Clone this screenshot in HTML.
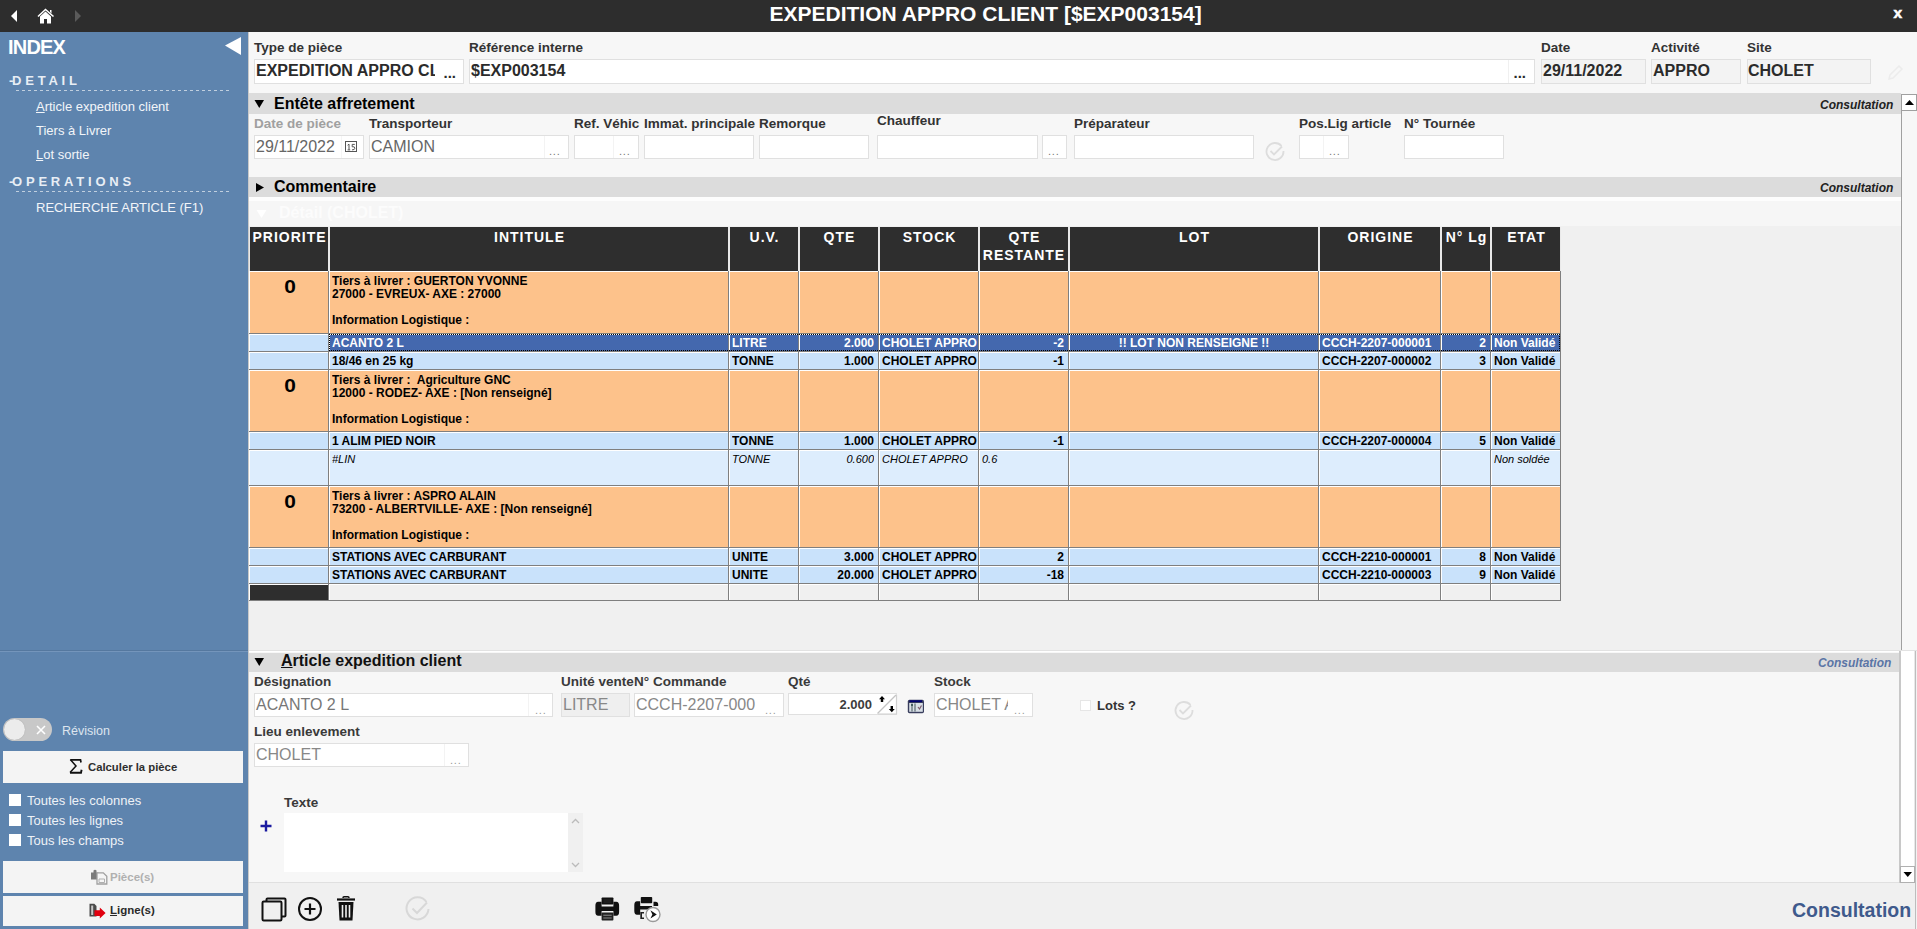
<!DOCTYPE html><html><head><meta charset="utf-8"><style>
*{box-sizing:border-box;margin:0;padding:0}
html,body{width:1917px;height:929px;overflow:hidden;background:#f7f7f7;font-family:"Liberation Sans",sans-serif;position:relative}
.abs{position:absolute}
.t{position:absolute;white-space:pre;line-height:1}
.lbl{position:absolute;white-space:pre;font-weight:bold;font-size:13.5px;color:#333;line-height:1}
.inp{position:absolute;background:#fff;border:1px solid #e0e0e0}
.band{position:absolute;background:#dcdcdc}
.dots{position:absolute;white-space:pre;font-size:11px;color:#777;line-height:1;letter-spacing:0px}
.cell{position:absolute;overflow:hidden;white-space:pre;font-weight:bold;font-size:12px;line-height:13px;color:#000}
</style></head><body>
<div class="abs" style="left:0;top:0;width:1917px;height:32px;background:#2d2d2d"></div>
<svg class="abs" style="left:0;top:0" width="100" height="31"><path d="M11 16 L17 10 L17 22 Z" fill="#fff"/><path d="M38 16.5 L45.5 9.5 L53.5 16.5" fill="none" stroke="#fff" stroke-width="1.6"/><path d="M40 16.5 L45.5 11.5 L51 16.5 L51 23.5 L47 23.5 L47 19 L44 19 L44 23.5 L40 23.5 Z" fill="#fff"/><path d="M50 10 L51.5 10 L51.5 13.5 L50 12 Z" fill="#fff"/><path d="M75 10 L81 16 L75 22 Z" fill="#5a5a5a"/></svg>
<div class="t" style="left:769.5px;top:2.5px;font-size:21px;font-weight:bold;color:#fff">EXPEDITION APPRO CLIENT [$EXP003154]</div>
<div class="t" style="left:1893.5px;top:5px;font-size:15.5px;font-weight:bold;color:#fff;-webkit-text-stroke:0.6px #fff">x</div>
<div class="abs" style="left:0;top:32px;width:249px;height:897px;background:#5e84ae"></div>
<div class="abs" style="left:0;top:650px;width:248px;height:1px;background:#55789f"></div><div class="abs" style="left:0;top:651px;width:248px;height:1px;background:#7495bb"></div>
<div class="t" style="left:8px;top:37px;font-size:20px;font-weight:bold;letter-spacing:-0.8px;color:#fff">INDEX</div>
<svg class="abs" style="left:222px;top:34px" width="24" height="24"><path d="M3 11.5 L19 3 L19 21 Z" fill="#fff"/></svg>
<div class="t" style="left:9px;top:74px;font-size:13px;font-weight:bold;color:#e8eef5">-</div>
<div class="t" style="left:12px;top:74px;font-size:13px;font-weight:bold;color:#e8eef5;letter-spacing:3.8px">DETAIL</div>
<div class="abs" style="left:16px;top:90px;width:213px;height:1px;background:repeating-linear-gradient(90deg,#c0cfdf 0 3px,transparent 3px 6px)"></div>
<div class="t" style="left:36px;top:100px;font-size:13px;color:#f2f5f9"><u>A</u>rticle expedition client</div>
<div class="t" style="left:36px;top:124px;font-size:13px;color:#f2f5f9">Tiers à Livrer</div>
<div class="t" style="left:36px;top:148px;font-size:13px;color:#f2f5f9"><u>L</u>ot sortie</div>
<div class="t" style="left:9px;top:175px;font-size:13px;font-weight:bold;color:#e8eef5">-</div>
<div class="t" style="left:12px;top:175px;font-size:13px;font-weight:bold;color:#e8eef5;letter-spacing:3.8px">OPERATIONS</div>
<div class="abs" style="left:16px;top:191px;width:213px;height:1px;background:repeating-linear-gradient(90deg,#c0cfdf 0 3px,transparent 3px 6px)"></div>
<div class="t" style="left:36px;top:201px;font-size:13px;color:#f2f5f9">RECHERCHE ARTICLE (F1)</div>
<div class="abs" style="left:3px;top:718px;width:49px;height:23px;border-radius:12px;background:#c8c8c8"></div>
<div class="abs" style="left:4px;top:719px;width:21px;height:21px;border-radius:50%;background:#ececec;box-shadow:0 0 1px #999"></div>
<svg class="abs" style="left:34px;top:723px" width="14" height="14"><path d="M3 3 L11 11 M11 3 L3 11" stroke="#fff" stroke-width="1.6"/></svg>
<div class="t" style="left:62px;top:725px;font-size:12.5px;color:#dde5ee">Révision</div>
<div class="abs" style="left:3px;top:751px;width:240px;height:32px;background:#f4f4f4"></div>
<svg class="abs" style="left:68px;top:758px" width="16" height="17"><path d="M2.5 1.8 H12.5 L13 4.5" fill="none" stroke="#111" stroke-width="1.7"/><path d="M2.3 1.5 L8 8 L2 14.5" fill="none" stroke="#111" stroke-width="1.5"/><path d="M2 14.8 H13 L13.6 11.8" fill="none" stroke="#111" stroke-width="1.9"/></svg>
<div class="t" style="left:88px;top:761.5px;font-size:11.3px;font-weight:bold;color:#2e2e2e">Calculer la pièce</div>
<div class="abs" style="left:9px;top:794px;width:12px;height:12px;background:#fff"></div>
<div class="t" style="left:27px;top:794px;font-size:13px;color:#eef2f7">Toutes les colonnes</div>
<div class="abs" style="left:9px;top:814px;width:12px;height:12px;background:#fff"></div>
<div class="t" style="left:27px;top:814px;font-size:13px;color:#eef2f7">Toutes les lignes</div>
<div class="abs" style="left:9px;top:834px;width:12px;height:12px;background:#fff"></div>
<div class="t" style="left:27px;top:834px;font-size:13px;color:#eef2f7">Tous les champs</div>
<div class="abs" style="left:3px;top:861px;width:240px;height:32px;background:#f4f4f4"></div>
<svg class="abs" style="left:86px;top:866px" width="24" height="22"><path d="M5 6.5 H7.5 V4.5 Q9 2.8 10.5 4.5 V6.5 H12.5 V9 Q10.8 9.8 12.5 11.2 V13.5 H5 Z" fill="#7a7a7a"/><path d="M11 6.8 H17.3 L20.8 10.3 V18 H11 Z" fill="#f5f5f5" stroke="#a0a0a0" stroke-width="1.3"/><path d="M13 13 H18.5 V16.5 H13 Z" fill="none" stroke="#b0b0b0" stroke-width="1"/></svg>
<div class="t" style="left:110px;top:872px;font-size:11.5px;font-weight:bold;color:#b0b0b0">Pièce(s)</div>
<div class="abs" style="left:3px;top:896px;width:240px;height:30px;background:#f4f4f4"></div>
<svg class="abs" style="left:86px;top:900px" width="24" height="22"><path d="M3.5 3.8 H8.3 L10.5 6 V16.5 H3.5 Z" fill="#4a4a4a"/><path d="M5.2 5.5 H7.2 V15 H5.2 Z" fill="#c8c8c8"/><path d="M8.5 10.2 H13.8 V7.6 L19.6 13.1 L13.8 18.6 V16 H8.5 Z" fill="#e0000f"/></svg>
<div class="t" style="left:110px;top:905px;font-size:11.5px;font-weight:bold;color:#2a2a2a"><u>L</u>igne(s)</div>
<div class="abs" style="left:249px;top:32px;width:1668px;height:619px;background:#f7f7f7"></div>
<div class="abs" style="left:248px;top:32px;width:1px;height:897px;background:#c9c9c9"></div>
<div class="lbl" style="left:254px;top:41px;color:#333">Type de pièce</div>
<div class="inp" style="left:254px;top:59px;width:210px;height:25px;background:#fff;border-color:#e0e0e0"></div>
<div class="t" style="left:256px;top:63px;width:179px;overflow:hidden;font-size:16px;font-weight:bold;color:#2b2b2b">EXPEDITION APPRO CL</div>
<div class="t" style="left:443.5px;top:65px;font-size:15px;font-weight:bold;color:#2b2b2b">...</div>
<div class="lbl" style="left:469px;top:41px;color:#333">Référence interne</div>
<div class="inp" style="left:469px;top:59px;width:1066px;height:25px;background:#fff;border-color:#e0e0e0"></div>
<div class="abs" style="left:1508px;top:60px;width:1px;height:23px;background:#f0f0f0"></div>
<div class="t" style="left:471px;top:63px;font-size:16px;font-weight:bold;color:#2b2b2b">$EXP003154</div>
<div class="t" style="left:1513.5px;top:65px;font-size:15px;font-weight:bold;color:#2b2b2b">...</div>
<div class="lbl" style="left:1541px;top:41px;color:#333">Date</div>
<div class="inp" style="left:1541px;top:59px;width:105px;height:25px;background:#f3f3f3;border-color:#e0e0e0"></div>
<div class="t" style="left:1543px;top:63px;font-size:16px;font-weight:bold;color:#2b2b2b">29/11/2022</div>
<div class="lbl" style="left:1651px;top:41px;color:#333">Activité</div>
<div class="inp" style="left:1651px;top:59px;width:90px;height:25px;background:#f3f3f3;border-color:#e0e0e0"></div>
<div class="t" style="left:1653px;top:63px;font-size:16px;font-weight:bold;color:#2b2b2b">APPRO</div>
<div class="lbl" style="left:1747px;top:41px;color:#333">Site</div>
<div class="inp" style="left:1747px;top:59px;width:124px;height:25px;background:#f3f3f3;border-color:#e0e0e0"></div>
<div class="t" style="left:1748px;top:63px;font-size:16px;font-weight:bold;color:#2b2b2b">CHOLET</div>
<svg class="abs" style="left:1886px;top:64px" width="18" height="18"><path d="M3 15 L4 11 L13 2 L16 5 L7 14 Z" fill="none" stroke="#ececec" stroke-width="1.5"/></svg>
<div class="band" style="left:249px;top:93px;width:1652px;height:21px"></div>
<svg class="abs" style="left:254px;top:99px" width="12" height="10"><path d="M0.5 1 L10 1 L5.25 9 Z" fill="#000"/></svg>
<div class="t" style="left:274px;top:96px;font-size:16px;font-weight:bold;color:#000">Entête affretement</div>
<div class="t" style="left:1820px;top:98.5px;font-size:12px;font-style:italic;font-weight:bold;color:#222">Consultation</div>
<div class="abs" style="left:1901px;top:94px;width:1px;height:557px;background:#a0a0a0"></div>
<div class="abs" style="left:1901px;top:94px;width:16px;height:17px;background:#fff;border:1px solid #a0a0a0"></div>
<svg class="abs" style="left:1904px;top:99px" width="12" height="8"><path d="M1 6 L5.5 1 L10 6 Z" fill="#000"/></svg>
<div class="lbl" style="left:254px;top:117px;color:#a0a0a0">Date de pièce</div>
<div class="inp" style="left:254px;top:135px;width:110px;height:24px;background:#fff;border-color:#e0e0e0"></div>
<div class="abs" style="left:341px;top:136px;width:1px;height:22px;background:#f5f5f5"></div>
<div class="t" style="left:256px;top:139px;font-size:16px;color:#666">29/11/2022</div>
<svg class="abs" style="left:344px;top:140px" width="14" height="14"><rect x="1.5" y="1.5" width="11" height="10" fill="none" stroke="#555" stroke-width="1"/><path d="M3.6 5.2 L5 4.2 V9.8 M3.6 9.9 H6.2" fill="none" stroke="#555" stroke-width="1"/><path d="M10.8 4.4 H8.2 V6.8 Q10.9 6.2 10.9 8.2 Q10.9 9.9 8 9.9" fill="none" stroke="#555" stroke-width="1"/></svg>
<div class="lbl" style="left:369px;top:117px;color:#333">Transporteur</div>
<div class="inp" style="left:369px;top:135px;width:200px;height:24px;background:#fff;border-color:#e0e0e0"></div>
<div class="abs" style="left:544px;top:136px;width:1px;height:22px;background:#f3f3f3"></div>
<div class="t" style="left:371px;top:139px;font-size:16px;color:#666">CAMION</div>
<div class="dots" style="left:549px;top:146px;color:#777;font-size:11px;letter-spacing:0.8px">...</div>
<div class="lbl" style="left:574px;top:117px;color:#333">Ref. Véhic</div>
<div class="inp" style="left:574px;top:135px;width:65px;height:24px;background:#fff;border-color:#e0e0e0"></div>
<div class="abs" style="left:613px;top:136px;width:1px;height:22px;background:#f3f3f3"></div>
<div class="dots" style="left:619px;top:146px;color:#777;font-size:11px;letter-spacing:0.8px">...</div>
<div class="lbl" style="left:644px;top:117px;color:#333">Immat. principale</div>
<div class="inp" style="left:644px;top:135px;width:110px;height:24px;background:#fff;border-color:#e0e0e0"></div>
<div class="lbl" style="left:759px;top:117px;color:#333">Remorque</div>
<div class="inp" style="left:759px;top:135px;width:110px;height:24px;background:#fff;border-color:#e0e0e0"></div>
<div class="lbl" style="left:877px;top:114px;color:#333">Chauffeur</div>
<div class="inp" style="left:877px;top:135px;width:161px;height:24px;background:#fff;border-color:#e0e0e0"></div>
<div class="inp" style="left:1042px;top:135px;width:25px;height:24px;background:#fff;border-color:#e0e0e0"></div>
<div class="dots" style="left:1048px;top:146px;color:#777;font-size:11px;letter-spacing:0.8px">...</div>
<div class="lbl" style="left:1074px;top:117px;color:#333">Préparateur</div>
<div class="inp" style="left:1074px;top:135px;width:180px;height:24px;background:#fff;border-color:#e0e0e0"></div>
<svg class="abs" style="left:1264px;top:140px" width="22" height="22"><path d="M17.5 6 A8.5 8.5 0 1 0 19.5 11" fill="none" stroke="#ddd" stroke-width="1.8"/><path d="M6.5 11 L10 14.5 L18 6.5" fill="none" stroke="#ddd" stroke-width="1.8"/></svg>
<div class="lbl" style="left:1299px;top:117px;color:#333">Pos.Lig article</div>
<div class="inp" style="left:1299px;top:135px;width:50px;height:24px;background:#fff;border-color:#e0e0e0"></div>
<div class="abs" style="left:1323px;top:136px;width:1px;height:22px;background:#f3f3f3"></div>
<div class="dots" style="left:1329px;top:146px;color:#777;font-size:11px;letter-spacing:0.8px">...</div>
<div class="lbl" style="left:1404px;top:117px;color:#333">N° Tournée</div>
<div class="inp" style="left:1404px;top:135px;width:100px;height:24px;background:#fff;border-color:#e0e0e0"></div>
<div class="band" style="left:249px;top:177px;width:1652px;height:20px"></div>
<svg class="abs" style="left:255px;top:182px" width="10" height="12"><path d="M1 1 L9 5.5 L1 10 Z" fill="#000"/></svg>
<div class="t" style="left:274px;top:179px;font-size:16px;font-weight:bold;color:#000">Commentaire</div>
<div class="t" style="left:1820px;top:181.5px;font-size:12px;font-style:italic;font-weight:bold;color:#222">Consultation</div>
<div class="abs" style="left:249px;top:197px;width:1652px;height:4px;background:#fdfdfd"></div>
<div class="abs" style="left:249px;top:201px;width:1652px;height:25px;background:#f6f6f6"></div>
<svg class="abs" style="left:256px;top:209px" width="12" height="10"><path d="M0.5 1 L10.5 1 L5.5 9 Z" fill="#fff"/></svg>
<div class="t" style="left:279px;top:205px;font-size:16px;font-weight:bold;color:#fcfcfc">Détail (CHOLET)</div>
<div class="abs" style="left:249px;top:226px;width:1652px;height:425px;background:#f0f0f0"></div>
<div class="abs" style="left:249px;top:227px;width:1312px;height:44px;background:#e9e9e9"></div>
<div class="abs" style="left:250px;top:227px;width:78px;height:44px;background:#2e2e2e"></div>
<div class="abs" style="left:250px;top:228px;width:78px;text-align:center;font-weight:bold;font-size:14px;letter-spacing:1px;text-indent:1px;line-height:18px;color:#fff">PRIORITE</div>
<div class="abs" style="left:330px;top:227px;width:398px;height:44px;background:#2e2e2e"></div>
<div class="abs" style="left:330px;top:228px;width:398px;text-align:center;font-weight:bold;font-size:14px;letter-spacing:1px;text-indent:1px;line-height:18px;color:#fff">INTITULE</div>
<div class="abs" style="left:730px;top:227px;width:68px;height:44px;background:#2e2e2e"></div>
<div class="abs" style="left:730px;top:228px;width:68px;text-align:center;font-weight:bold;font-size:14px;letter-spacing:1px;text-indent:1px;line-height:18px;color:#fff">U.V.</div>
<div class="abs" style="left:800px;top:227px;width:78px;height:44px;background:#2e2e2e"></div>
<div class="abs" style="left:800px;top:228px;width:78px;text-align:center;font-weight:bold;font-size:14px;letter-spacing:1px;text-indent:1px;line-height:18px;color:#fff">QTE</div>
<div class="abs" style="left:880px;top:227px;width:98px;height:44px;background:#2e2e2e"></div>
<div class="abs" style="left:880px;top:228px;width:98px;text-align:center;font-weight:bold;font-size:14px;letter-spacing:1px;text-indent:1px;line-height:18px;color:#fff">STOCK</div>
<div class="abs" style="left:980px;top:227px;width:88px;height:44px;background:#2e2e2e"></div>
<div class="abs" style="left:980px;top:228px;width:88px;text-align:center;font-weight:bold;font-size:14px;letter-spacing:1px;text-indent:1px;line-height:18px;color:#fff">QTE<br>RESTANTE</div>
<div class="abs" style="left:1070px;top:227px;width:248px;height:44px;background:#2e2e2e"></div>
<div class="abs" style="left:1070px;top:228px;width:248px;text-align:center;font-weight:bold;font-size:14px;letter-spacing:1px;text-indent:1px;line-height:18px;color:#fff">LOT</div>
<div class="abs" style="left:1320px;top:227px;width:120px;height:44px;background:#2e2e2e"></div>
<div class="abs" style="left:1320px;top:228px;width:120px;text-align:center;font-weight:bold;font-size:14px;letter-spacing:1px;text-indent:1px;line-height:18px;color:#fff">ORIGINE</div>
<div class="abs" style="left:1442px;top:227px;width:48px;height:44px;background:#2e2e2e"></div>
<div class="abs" style="left:1442px;top:228px;width:48px;text-align:center;font-weight:bold;font-size:14px;letter-spacing:1px;text-indent:1px;line-height:18px;color:#fff">N° Lg</div>
<div class="abs" style="left:1492px;top:227px;width:68px;height:44px;background:#2e2e2e"></div>
<div class="abs" style="left:1492px;top:228px;width:68px;text-align:center;font-weight:bold;font-size:14px;letter-spacing:1px;text-indent:1px;line-height:18px;color:#fff">ETAT</div>
<div class="abs" style="left:249px;top:271px;width:1312px;height:63px;background:#7f7f7f"></div>
<div class="abs" style="left:249px;top:271px;width:79px;height:62px;background:#fff"></div>
<div class="abs" style="left:250px;top:272px;width:78px;height:61px;background:#fdc28b"></div>
<div class="abs" style="left:329px;top:271px;width:399px;height:62px;background:#fff"></div>
<div class="abs" style="left:330px;top:272px;width:398px;height:61px;background:#fdc28b"></div>
<div class="abs" style="left:729px;top:271px;width:69px;height:62px;background:#fff"></div>
<div class="abs" style="left:730px;top:272px;width:68px;height:61px;background:#fdc28b"></div>
<div class="abs" style="left:799px;top:271px;width:79px;height:62px;background:#fff"></div>
<div class="abs" style="left:800px;top:272px;width:78px;height:61px;background:#fdc28b"></div>
<div class="abs" style="left:879px;top:271px;width:99px;height:62px;background:#fff"></div>
<div class="abs" style="left:880px;top:272px;width:98px;height:61px;background:#fdc28b"></div>
<div class="abs" style="left:979px;top:271px;width:89px;height:62px;background:#fff"></div>
<div class="abs" style="left:980px;top:272px;width:88px;height:61px;background:#fdc28b"></div>
<div class="abs" style="left:1069px;top:271px;width:249px;height:62px;background:#fff"></div>
<div class="abs" style="left:1070px;top:272px;width:248px;height:61px;background:#fdc28b"></div>
<div class="abs" style="left:1319px;top:271px;width:121px;height:62px;background:#fff"></div>
<div class="abs" style="left:1320px;top:272px;width:120px;height:61px;background:#fdc28b"></div>
<div class="abs" style="left:1441px;top:271px;width:49px;height:62px;background:#fff"></div>
<div class="abs" style="left:1442px;top:272px;width:48px;height:61px;background:#fdc28b"></div>
<div class="abs" style="left:1491px;top:271px;width:69px;height:62px;background:#fff"></div>
<div class="abs" style="left:1492px;top:272px;width:68px;height:61px;background:#fdc28b"></div>
<div class="t" style="top:277px;left:251px;width:78px;text-align:center;font-weight:bold;font-size:19px;color:#000;transform:scaleX(1.1)">0</div>
<div class="cell" style="left:332px;top:275px;width:396px">Tiers à livrer : GUERTON YVONNE<br>27000 - EVREUX- AXE : 27000<br><br>Information Logistique :</div>
<div class="abs" style="left:249px;top:334px;width:1312px;height:18px;background:#7f7f7f"></div>
<div class="abs" style="left:249px;top:334px;width:79px;height:17px;background:#fff"></div>
<div class="abs" style="left:250px;top:335px;width:78px;height:16px;background:#c9e2fb"></div>
<div class="abs" style="left:329px;top:334px;width:399px;height:17px;background:#fff"></div>
<div class="abs" style="left:330px;top:335px;width:398px;height:16px;background:#4468ae"></div>
<div class="abs" style="left:729px;top:334px;width:69px;height:17px;background:#fff"></div>
<div class="abs" style="left:730px;top:335px;width:68px;height:16px;background:#4468ae"></div>
<div class="abs" style="left:799px;top:334px;width:79px;height:17px;background:#fff"></div>
<div class="abs" style="left:800px;top:335px;width:78px;height:16px;background:#4468ae"></div>
<div class="abs" style="left:879px;top:334px;width:99px;height:17px;background:#fff"></div>
<div class="abs" style="left:880px;top:335px;width:98px;height:16px;background:#4468ae"></div>
<div class="abs" style="left:979px;top:334px;width:89px;height:17px;background:#fff"></div>
<div class="abs" style="left:980px;top:335px;width:88px;height:16px;background:#4468ae"></div>
<div class="abs" style="left:1069px;top:334px;width:249px;height:17px;background:#fff"></div>
<div class="abs" style="left:1070px;top:335px;width:248px;height:16px;background:#4468ae"></div>
<div class="abs" style="left:1319px;top:334px;width:121px;height:17px;background:#fff"></div>
<div class="abs" style="left:1320px;top:335px;width:120px;height:16px;background:#4468ae"></div>
<div class="abs" style="left:1441px;top:334px;width:49px;height:17px;background:#fff"></div>
<div class="abs" style="left:1442px;top:335px;width:48px;height:16px;background:#4468ae"></div>
<div class="abs" style="left:1491px;top:334px;width:69px;height:17px;background:#fff"></div>
<div class="abs" style="left:1492px;top:335px;width:68px;height:16px;background:#4468ae"></div>
<div class="cell" style="left:332px;top:337px;width:396px;color:#fff;">ACANTO 2 L</div>
<div class="cell" style="left:732px;top:337px;width:66px;color:#fff;">LITRE</div>
<div class="cell" style="left:800px;top:337px;width:74px;text-align:right;color:#fff;">2.000</div>
<div class="cell" style="left:882px;top:337px;width:96px;color:#fff;">CHOLET APPRO</div>
<div class="cell" style="left:980px;top:337px;width:84px;text-align:right;color:#fff;">-2</div>
<div class="cell" style="left:1070px;top:337px;width:248px;text-align:center;color:#fff;">!! LOT NON RENSEIGNE !!</div>
<div class="cell" style="left:1322px;top:337px;width:118px;color:#fff;">CCCH-2207-000001</div>
<div class="cell" style="left:1442px;top:337px;width:44px;text-align:right;color:#fff;">2</div>
<div class="cell" style="left:1494px;top:337px;width:66px;color:#fff;">Non Validé</div>
<div class="abs" style="left:249px;top:352px;width:1312px;height:18px;background:#7f7f7f"></div>
<div class="abs" style="left:249px;top:352px;width:79px;height:17px;background:#fff"></div>
<div class="abs" style="left:250px;top:353px;width:78px;height:16px;background:#c9e2fb"></div>
<div class="abs" style="left:329px;top:352px;width:399px;height:17px;background:#fff"></div>
<div class="abs" style="left:330px;top:353px;width:398px;height:16px;background:#c9e2fb"></div>
<div class="abs" style="left:729px;top:352px;width:69px;height:17px;background:#fff"></div>
<div class="abs" style="left:730px;top:353px;width:68px;height:16px;background:#c9e2fb"></div>
<div class="abs" style="left:799px;top:352px;width:79px;height:17px;background:#fff"></div>
<div class="abs" style="left:800px;top:353px;width:78px;height:16px;background:#c9e2fb"></div>
<div class="abs" style="left:879px;top:352px;width:99px;height:17px;background:#fff"></div>
<div class="abs" style="left:880px;top:353px;width:98px;height:16px;background:#c9e2fb"></div>
<div class="abs" style="left:979px;top:352px;width:89px;height:17px;background:#fff"></div>
<div class="abs" style="left:980px;top:353px;width:88px;height:16px;background:#c9e2fb"></div>
<div class="abs" style="left:1069px;top:352px;width:249px;height:17px;background:#fff"></div>
<div class="abs" style="left:1070px;top:353px;width:248px;height:16px;background:#c9e2fb"></div>
<div class="abs" style="left:1319px;top:352px;width:121px;height:17px;background:#fff"></div>
<div class="abs" style="left:1320px;top:353px;width:120px;height:16px;background:#c9e2fb"></div>
<div class="abs" style="left:1441px;top:352px;width:49px;height:17px;background:#fff"></div>
<div class="abs" style="left:1442px;top:353px;width:48px;height:16px;background:#c9e2fb"></div>
<div class="abs" style="left:1491px;top:352px;width:69px;height:17px;background:#fff"></div>
<div class="abs" style="left:1492px;top:353px;width:68px;height:16px;background:#c9e2fb"></div>
<div class="cell" style="left:332px;top:355px;width:396px;color:#000;">18/46 en 25 kg</div>
<div class="cell" style="left:732px;top:355px;width:66px;color:#000;">TONNE</div>
<div class="cell" style="left:800px;top:355px;width:74px;text-align:right;color:#000;">1.000</div>
<div class="cell" style="left:882px;top:355px;width:96px;color:#000;">CHOLET APPRO</div>
<div class="cell" style="left:980px;top:355px;width:84px;text-align:right;color:#000;">-1</div>
<div class="cell" style="left:1322px;top:355px;width:118px;color:#000;">CCCH-2207-000002</div>
<div class="cell" style="left:1442px;top:355px;width:44px;text-align:right;color:#000;">3</div>
<div class="cell" style="left:1494px;top:355px;width:66px;color:#000;">Non Validé</div>
<div class="abs" style="left:249px;top:370px;width:1312px;height:62px;background:#7f7f7f"></div>
<div class="abs" style="left:249px;top:370px;width:79px;height:61px;background:#fff"></div>
<div class="abs" style="left:250px;top:371px;width:78px;height:60px;background:#fdc28b"></div>
<div class="abs" style="left:329px;top:370px;width:399px;height:61px;background:#fff"></div>
<div class="abs" style="left:330px;top:371px;width:398px;height:60px;background:#fdc28b"></div>
<div class="abs" style="left:729px;top:370px;width:69px;height:61px;background:#fff"></div>
<div class="abs" style="left:730px;top:371px;width:68px;height:60px;background:#fdc28b"></div>
<div class="abs" style="left:799px;top:370px;width:79px;height:61px;background:#fff"></div>
<div class="abs" style="left:800px;top:371px;width:78px;height:60px;background:#fdc28b"></div>
<div class="abs" style="left:879px;top:370px;width:99px;height:61px;background:#fff"></div>
<div class="abs" style="left:880px;top:371px;width:98px;height:60px;background:#fdc28b"></div>
<div class="abs" style="left:979px;top:370px;width:89px;height:61px;background:#fff"></div>
<div class="abs" style="left:980px;top:371px;width:88px;height:60px;background:#fdc28b"></div>
<div class="abs" style="left:1069px;top:370px;width:249px;height:61px;background:#fff"></div>
<div class="abs" style="left:1070px;top:371px;width:248px;height:60px;background:#fdc28b"></div>
<div class="abs" style="left:1319px;top:370px;width:121px;height:61px;background:#fff"></div>
<div class="abs" style="left:1320px;top:371px;width:120px;height:60px;background:#fdc28b"></div>
<div class="abs" style="left:1441px;top:370px;width:49px;height:61px;background:#fff"></div>
<div class="abs" style="left:1442px;top:371px;width:48px;height:60px;background:#fdc28b"></div>
<div class="abs" style="left:1491px;top:370px;width:69px;height:61px;background:#fff"></div>
<div class="abs" style="left:1492px;top:371px;width:68px;height:60px;background:#fdc28b"></div>
<div class="t" style="top:376px;left:251px;width:78px;text-align:center;font-weight:bold;font-size:19px;color:#000;transform:scaleX(1.1)">0</div>
<div class="cell" style="left:332px;top:374px;width:396px">Tiers à livrer :  Agriculture GNC<br>12000 - RODEZ- AXE : [Non renseigné]<br><br>Information Logistique :</div>
<div class="abs" style="left:249px;top:432px;width:1312px;height:18px;background:#7f7f7f"></div>
<div class="abs" style="left:249px;top:432px;width:79px;height:17px;background:#fff"></div>
<div class="abs" style="left:250px;top:433px;width:78px;height:16px;background:#c9e2fb"></div>
<div class="abs" style="left:329px;top:432px;width:399px;height:17px;background:#fff"></div>
<div class="abs" style="left:330px;top:433px;width:398px;height:16px;background:#c9e2fb"></div>
<div class="abs" style="left:729px;top:432px;width:69px;height:17px;background:#fff"></div>
<div class="abs" style="left:730px;top:433px;width:68px;height:16px;background:#c9e2fb"></div>
<div class="abs" style="left:799px;top:432px;width:79px;height:17px;background:#fff"></div>
<div class="abs" style="left:800px;top:433px;width:78px;height:16px;background:#c9e2fb"></div>
<div class="abs" style="left:879px;top:432px;width:99px;height:17px;background:#fff"></div>
<div class="abs" style="left:880px;top:433px;width:98px;height:16px;background:#c9e2fb"></div>
<div class="abs" style="left:979px;top:432px;width:89px;height:17px;background:#fff"></div>
<div class="abs" style="left:980px;top:433px;width:88px;height:16px;background:#c9e2fb"></div>
<div class="abs" style="left:1069px;top:432px;width:249px;height:17px;background:#fff"></div>
<div class="abs" style="left:1070px;top:433px;width:248px;height:16px;background:#c9e2fb"></div>
<div class="abs" style="left:1319px;top:432px;width:121px;height:17px;background:#fff"></div>
<div class="abs" style="left:1320px;top:433px;width:120px;height:16px;background:#c9e2fb"></div>
<div class="abs" style="left:1441px;top:432px;width:49px;height:17px;background:#fff"></div>
<div class="abs" style="left:1442px;top:433px;width:48px;height:16px;background:#c9e2fb"></div>
<div class="abs" style="left:1491px;top:432px;width:69px;height:17px;background:#fff"></div>
<div class="abs" style="left:1492px;top:433px;width:68px;height:16px;background:#c9e2fb"></div>
<div class="cell" style="left:332px;top:435px;width:396px;color:#000;">1 ALIM PIED NOIR</div>
<div class="cell" style="left:732px;top:435px;width:66px;color:#000;">TONNE</div>
<div class="cell" style="left:800px;top:435px;width:74px;text-align:right;color:#000;">1.000</div>
<div class="cell" style="left:882px;top:435px;width:96px;color:#000;">CHOLET APPRO</div>
<div class="cell" style="left:980px;top:435px;width:84px;text-align:right;color:#000;">-1</div>
<div class="cell" style="left:1322px;top:435px;width:118px;color:#000;">CCCH-2207-000004</div>
<div class="cell" style="left:1442px;top:435px;width:44px;text-align:right;color:#000;">5</div>
<div class="cell" style="left:1494px;top:435px;width:66px;color:#000;">Non Validé</div>
<div class="abs" style="left:249px;top:450px;width:1312px;height:36px;background:#7f7f7f"></div>
<div class="abs" style="left:249px;top:450px;width:79px;height:35px;background:#fff"></div>
<div class="abs" style="left:250px;top:451px;width:78px;height:34px;background:#ddedfd"></div>
<div class="abs" style="left:329px;top:450px;width:399px;height:35px;background:#fff"></div>
<div class="abs" style="left:330px;top:451px;width:398px;height:34px;background:#ddedfd"></div>
<div class="abs" style="left:729px;top:450px;width:69px;height:35px;background:#fff"></div>
<div class="abs" style="left:730px;top:451px;width:68px;height:34px;background:#ddedfd"></div>
<div class="abs" style="left:799px;top:450px;width:79px;height:35px;background:#fff"></div>
<div class="abs" style="left:800px;top:451px;width:78px;height:34px;background:#ddedfd"></div>
<div class="abs" style="left:879px;top:450px;width:99px;height:35px;background:#fff"></div>
<div class="abs" style="left:880px;top:451px;width:98px;height:34px;background:#ddedfd"></div>
<div class="abs" style="left:979px;top:450px;width:89px;height:35px;background:#fff"></div>
<div class="abs" style="left:980px;top:451px;width:88px;height:34px;background:#ddedfd"></div>
<div class="abs" style="left:1069px;top:450px;width:249px;height:35px;background:#fff"></div>
<div class="abs" style="left:1070px;top:451px;width:248px;height:34px;background:#ddedfd"></div>
<div class="abs" style="left:1319px;top:450px;width:121px;height:35px;background:#fff"></div>
<div class="abs" style="left:1320px;top:451px;width:120px;height:34px;background:#ddedfd"></div>
<div class="abs" style="left:1441px;top:450px;width:49px;height:35px;background:#fff"></div>
<div class="abs" style="left:1442px;top:451px;width:48px;height:34px;background:#ddedfd"></div>
<div class="abs" style="left:1491px;top:450px;width:69px;height:35px;background:#fff"></div>
<div class="abs" style="left:1492px;top:451px;width:68px;height:34px;background:#ddedfd"></div>
<div class="cell" style="left:332px;top:453px;width:396px;color:#000;font-weight:normal;font-style:italic;font-size:11px;">#LIN</div>
<div class="cell" style="left:732px;top:453px;width:66px;color:#000;font-weight:normal;font-style:italic;font-size:11px;">TONNE</div>
<div class="cell" style="left:800px;top:453px;width:74px;text-align:right;color:#000;font-weight:normal;font-style:italic;font-size:11px;">0.600</div>
<div class="cell" style="left:882px;top:453px;width:96px;color:#000;font-weight:normal;font-style:italic;font-size:11px;">CHOLET APPRO</div>
<div class="cell" style="left:982px;top:453px;width:86px;color:#000;font-weight:normal;font-style:italic;font-size:11px;">0.6</div>
<div class="cell" style="left:1494px;top:453px;width:66px;color:#000;font-weight:normal;font-style:italic;font-size:11px;">Non soldée</div>
<div class="abs" style="left:249px;top:486px;width:1312px;height:62px;background:#7f7f7f"></div>
<div class="abs" style="left:249px;top:486px;width:79px;height:61px;background:#fff"></div>
<div class="abs" style="left:250px;top:487px;width:78px;height:60px;background:#fdc28b"></div>
<div class="abs" style="left:329px;top:486px;width:399px;height:61px;background:#fff"></div>
<div class="abs" style="left:330px;top:487px;width:398px;height:60px;background:#fdc28b"></div>
<div class="abs" style="left:729px;top:486px;width:69px;height:61px;background:#fff"></div>
<div class="abs" style="left:730px;top:487px;width:68px;height:60px;background:#fdc28b"></div>
<div class="abs" style="left:799px;top:486px;width:79px;height:61px;background:#fff"></div>
<div class="abs" style="left:800px;top:487px;width:78px;height:60px;background:#fdc28b"></div>
<div class="abs" style="left:879px;top:486px;width:99px;height:61px;background:#fff"></div>
<div class="abs" style="left:880px;top:487px;width:98px;height:60px;background:#fdc28b"></div>
<div class="abs" style="left:979px;top:486px;width:89px;height:61px;background:#fff"></div>
<div class="abs" style="left:980px;top:487px;width:88px;height:60px;background:#fdc28b"></div>
<div class="abs" style="left:1069px;top:486px;width:249px;height:61px;background:#fff"></div>
<div class="abs" style="left:1070px;top:487px;width:248px;height:60px;background:#fdc28b"></div>
<div class="abs" style="left:1319px;top:486px;width:121px;height:61px;background:#fff"></div>
<div class="abs" style="left:1320px;top:487px;width:120px;height:60px;background:#fdc28b"></div>
<div class="abs" style="left:1441px;top:486px;width:49px;height:61px;background:#fff"></div>
<div class="abs" style="left:1442px;top:487px;width:48px;height:60px;background:#fdc28b"></div>
<div class="abs" style="left:1491px;top:486px;width:69px;height:61px;background:#fff"></div>
<div class="abs" style="left:1492px;top:487px;width:68px;height:60px;background:#fdc28b"></div>
<div class="t" style="top:492px;left:251px;width:78px;text-align:center;font-weight:bold;font-size:19px;color:#000;transform:scaleX(1.1)">0</div>
<div class="cell" style="left:332px;top:490px;width:396px">Tiers à livrer : ASPRO ALAIN<br>73200 - ALBERTVILLE- AXE : [Non renseigné]<br><br>Information Logistique :</div>
<div class="abs" style="left:249px;top:548px;width:1312px;height:18px;background:#7f7f7f"></div>
<div class="abs" style="left:249px;top:548px;width:79px;height:17px;background:#fff"></div>
<div class="abs" style="left:250px;top:549px;width:78px;height:16px;background:#c9e2fb"></div>
<div class="abs" style="left:329px;top:548px;width:399px;height:17px;background:#fff"></div>
<div class="abs" style="left:330px;top:549px;width:398px;height:16px;background:#c9e2fb"></div>
<div class="abs" style="left:729px;top:548px;width:69px;height:17px;background:#fff"></div>
<div class="abs" style="left:730px;top:549px;width:68px;height:16px;background:#c9e2fb"></div>
<div class="abs" style="left:799px;top:548px;width:79px;height:17px;background:#fff"></div>
<div class="abs" style="left:800px;top:549px;width:78px;height:16px;background:#c9e2fb"></div>
<div class="abs" style="left:879px;top:548px;width:99px;height:17px;background:#fff"></div>
<div class="abs" style="left:880px;top:549px;width:98px;height:16px;background:#c9e2fb"></div>
<div class="abs" style="left:979px;top:548px;width:89px;height:17px;background:#fff"></div>
<div class="abs" style="left:980px;top:549px;width:88px;height:16px;background:#c9e2fb"></div>
<div class="abs" style="left:1069px;top:548px;width:249px;height:17px;background:#fff"></div>
<div class="abs" style="left:1070px;top:549px;width:248px;height:16px;background:#c9e2fb"></div>
<div class="abs" style="left:1319px;top:548px;width:121px;height:17px;background:#fff"></div>
<div class="abs" style="left:1320px;top:549px;width:120px;height:16px;background:#c9e2fb"></div>
<div class="abs" style="left:1441px;top:548px;width:49px;height:17px;background:#fff"></div>
<div class="abs" style="left:1442px;top:549px;width:48px;height:16px;background:#c9e2fb"></div>
<div class="abs" style="left:1491px;top:548px;width:69px;height:17px;background:#fff"></div>
<div class="abs" style="left:1492px;top:549px;width:68px;height:16px;background:#c9e2fb"></div>
<div class="cell" style="left:332px;top:551px;width:396px;color:#000;">STATIONS AVEC CARBURANT</div>
<div class="cell" style="left:732px;top:551px;width:66px;color:#000;">UNITE</div>
<div class="cell" style="left:800px;top:551px;width:74px;text-align:right;color:#000;">3.000</div>
<div class="cell" style="left:882px;top:551px;width:96px;color:#000;">CHOLET APPRO</div>
<div class="cell" style="left:980px;top:551px;width:84px;text-align:right;color:#000;">2</div>
<div class="cell" style="left:1322px;top:551px;width:118px;color:#000;">CCCH-2210-000001</div>
<div class="cell" style="left:1442px;top:551px;width:44px;text-align:right;color:#000;">8</div>
<div class="cell" style="left:1494px;top:551px;width:66px;color:#000;">Non Validé</div>
<div class="abs" style="left:249px;top:566px;width:1312px;height:18px;background:#7f7f7f"></div>
<div class="abs" style="left:249px;top:566px;width:79px;height:17px;background:#fff"></div>
<div class="abs" style="left:250px;top:567px;width:78px;height:16px;background:#c9e2fb"></div>
<div class="abs" style="left:329px;top:566px;width:399px;height:17px;background:#fff"></div>
<div class="abs" style="left:330px;top:567px;width:398px;height:16px;background:#c9e2fb"></div>
<div class="abs" style="left:729px;top:566px;width:69px;height:17px;background:#fff"></div>
<div class="abs" style="left:730px;top:567px;width:68px;height:16px;background:#c9e2fb"></div>
<div class="abs" style="left:799px;top:566px;width:79px;height:17px;background:#fff"></div>
<div class="abs" style="left:800px;top:567px;width:78px;height:16px;background:#c9e2fb"></div>
<div class="abs" style="left:879px;top:566px;width:99px;height:17px;background:#fff"></div>
<div class="abs" style="left:880px;top:567px;width:98px;height:16px;background:#c9e2fb"></div>
<div class="abs" style="left:979px;top:566px;width:89px;height:17px;background:#fff"></div>
<div class="abs" style="left:980px;top:567px;width:88px;height:16px;background:#c9e2fb"></div>
<div class="abs" style="left:1069px;top:566px;width:249px;height:17px;background:#fff"></div>
<div class="abs" style="left:1070px;top:567px;width:248px;height:16px;background:#c9e2fb"></div>
<div class="abs" style="left:1319px;top:566px;width:121px;height:17px;background:#fff"></div>
<div class="abs" style="left:1320px;top:567px;width:120px;height:16px;background:#c9e2fb"></div>
<div class="abs" style="left:1441px;top:566px;width:49px;height:17px;background:#fff"></div>
<div class="abs" style="left:1442px;top:567px;width:48px;height:16px;background:#c9e2fb"></div>
<div class="abs" style="left:1491px;top:566px;width:69px;height:17px;background:#fff"></div>
<div class="abs" style="left:1492px;top:567px;width:68px;height:16px;background:#c9e2fb"></div>
<div class="cell" style="left:332px;top:569px;width:396px;color:#000;">STATIONS AVEC CARBURANT</div>
<div class="cell" style="left:732px;top:569px;width:66px;color:#000;">UNITE</div>
<div class="cell" style="left:800px;top:569px;width:74px;text-align:right;color:#000;">20.000</div>
<div class="cell" style="left:882px;top:569px;width:96px;color:#000;">CHOLET APPRO</div>
<div class="cell" style="left:980px;top:569px;width:84px;text-align:right;color:#000;">-18</div>
<div class="cell" style="left:1322px;top:569px;width:118px;color:#000;">CCCH-2210-000003</div>
<div class="cell" style="left:1442px;top:569px;width:44px;text-align:right;color:#000;">9</div>
<div class="cell" style="left:1494px;top:569px;width:66px;color:#000;">Non Validé</div>
<div class="abs" style="left:249px;top:584px;width:1312px;height:17px;background:#7f7f7f"></div>
<div class="abs" style="left:249px;top:584px;width:79px;height:16px;background:#fff"></div>
<div class="abs" style="left:250px;top:585px;width:78px;height:15px;background:#2e2e2e"></div>
<div class="abs" style="left:329px;top:584px;width:399px;height:16px;background:#fff"></div>
<div class="abs" style="left:330px;top:585px;width:398px;height:15px;background:#f0f0f0"></div>
<div class="abs" style="left:729px;top:584px;width:69px;height:16px;background:#fff"></div>
<div class="abs" style="left:730px;top:585px;width:68px;height:15px;background:#f0f0f0"></div>
<div class="abs" style="left:799px;top:584px;width:79px;height:16px;background:#fff"></div>
<div class="abs" style="left:800px;top:585px;width:78px;height:15px;background:#f0f0f0"></div>
<div class="abs" style="left:879px;top:584px;width:99px;height:16px;background:#fff"></div>
<div class="abs" style="left:880px;top:585px;width:98px;height:15px;background:#f0f0f0"></div>
<div class="abs" style="left:979px;top:584px;width:89px;height:16px;background:#fff"></div>
<div class="abs" style="left:980px;top:585px;width:88px;height:15px;background:#f0f0f0"></div>
<div class="abs" style="left:1069px;top:584px;width:249px;height:16px;background:#fff"></div>
<div class="abs" style="left:1070px;top:585px;width:248px;height:15px;background:#f0f0f0"></div>
<div class="abs" style="left:1319px;top:584px;width:121px;height:16px;background:#fff"></div>
<div class="abs" style="left:1320px;top:585px;width:120px;height:15px;background:#f0f0f0"></div>
<div class="abs" style="left:1441px;top:584px;width:49px;height:16px;background:#fff"></div>
<div class="abs" style="left:1442px;top:585px;width:48px;height:15px;background:#f0f0f0"></div>
<div class="abs" style="left:1491px;top:584px;width:69px;height:16px;background:#fff"></div>
<div class="abs" style="left:1492px;top:585px;width:68px;height:15px;background:#f0f0f0"></div>
<div class="abs" style="left:329px;top:334px;width:1231px;height:17px;border:1px dotted #000"></div>
<div class="abs" style="left:249px;top:650px;width:1668px;height:1px;background:#e2e2e2"></div>
<div class="abs" style="left:249px;top:651px;width:1668px;height:232px;background:#f7f7f7;border-top:1px solid #fff"></div>
<div class="band" style="left:249px;top:653px;width:1650px;height:19px"></div>
<svg class="abs" style="left:254px;top:657px" width="12" height="10"><path d="M0.5 1 L10 1 L5.25 9 Z" fill="#000"/></svg>
<div class="t" style="left:281px;top:653px;font-size:16px;font-weight:bold;color:#111"><u>A</u>rticle expedition client</div>
<div class="t" style="left:1818px;top:657px;font-size:12px;font-style:italic;font-weight:bold;color:#5a75a6">Consultation</div>
<div class="abs" style="left:1899px;top:651px;width:2px;height:232px;background:#c8c8c8"></div>
<div class="abs" style="left:1901px;top:651px;width:14px;height:232px;background:#fff"></div>
<div class="abs" style="left:1914px;top:651px;width:1px;height:232px;background:#e8e8e8"></div><div class="abs" style="left:1915px;top:651px;width:1px;height:278px;background:#bdbdbd"></div><div class="abs" style="left:1916px;top:651px;width:1px;height:278px;background:#f2f2f2"></div>
<div class="abs" style="left:1900px;top:866px;width:15px;height:17px;background:#fff;border:1px solid #b0b0b0"></div>
<svg class="abs" style="left:1903px;top:871px" width="10" height="8"><path d="M0.5 1 L9 1 L4.75 6 Z" fill="#000"/></svg>
<div class="lbl" style="left:254px;top:675px;color:#3a3a3a">Désignation</div>
<div class="inp" style="left:254px;top:693px;width:299px;height:24px;background:#fff;border-color:#e0e0e0"></div>
<div class="abs" style="left:528px;top:694px;width:1px;height:22px;background:#f3f3f3"></div>
<div class="t" style="left:256px;top:697px;font-size:16px;color:#777">ACANTO 2 L</div>
<div class="dots" style="left:535px;top:705px;color:#999;font-size:11px;letter-spacing:0.8px">...</div>
<div class="lbl" style="left:561px;top:675px;color:#3a3a3a">Unité vente</div>
<div class="inp" style="left:561px;top:693px;width:69px;height:24px;background:#efefef;border-color:#e0e0e0"></div>
<div class="t" style="left:563px;top:697px;font-size:16px;color:#888">LITRE</div>
<div class="lbl" style="left:634px;top:675px;color:#3a3a3a">N° Commande</div>
<div class="inp" style="left:634px;top:693px;width:150px;height:24px;background:#fff;border-color:#e0e0e0"></div>
<div class="t" style="left:636px;top:697px;font-size:16px;color:#888">CCCH-2207-000</div>
<div class="dots" style="left:765px;top:705px;color:#999;font-size:11px;letter-spacing:0.8px">...</div>
<div class="lbl" style="left:788px;top:675px;color:#3a3a3a">Qté</div>
<div class="inp" style="left:788px;top:693px;width:109px;height:22px;background:#fff;border-color:#e0e0e0"></div>
<div class="t" style="left:808px;top:698px;width:64px;text-align:right;font-size:13px;font-weight:bold;color:#3c3c3c">2.000</div>
<svg class="abs" style="left:876px;top:693px" width="22" height="22"><path d="M1.5 20.5 L20 2" stroke="#c4c4c4" stroke-width="1.3"/><path d="M20.5 2 V21 H2" fill="none" stroke="#d0d0d0" stroke-width="1.2"/><path d="M6 3 L9 6.2 H7.2 V9 H4.8 V6.2 H3 Z" fill="#000"/><path d="M15.8 19.2 L18.8 16 H17 V13 H14.6 V16 H12.8 Z" fill="#000"/></svg>
<svg class="abs" style="left:907px;top:699px" width="18" height="15"><rect x="0.8" y="0.8" width="16.2" height="13.4" rx="1.6" fill="#3a3f5e"/><rect x="2.5" y="1.3" width="12.5" height="1.8" fill="#000070"/><rect x="2.2" y="4" width="13.6" height="8.8" fill="#d8dfe6"/><path d="M5 4.5 V12.5 M8 4.5 V12.5" stroke="#5a6a70" stroke-width="1.2"/><path d="M4 6 H6" stroke="#2a4a4a" stroke-width="1.5"/><path d="M11 8 L12.5 10 L14.5 6.5" stroke="#7a5a6a" stroke-width="1.2" fill="none"/></svg>
<div class="lbl" style="left:934px;top:675px;color:#3a3a3a">Stock</div>
<div class="inp" style="left:934px;top:693px;width:99px;height:24px;background:#fff;border-color:#e0e0e0"></div>
<div class="t" style="left:936px;top:697px;width:72px;overflow:hidden;font-size:16px;color:#888">CHOLET APPRO</div>
<div class="dots" style="left:1014px;top:705px;color:#999;font-size:11px;letter-spacing:0.8px">...</div>
<div class="abs" style="left:1080px;top:700px;width:11px;height:11px;background:#fff;border:1px solid #e6e6e6"></div>
<div class="t" style="left:1097px;top:699px;font-size:13px;font-weight:bold;color:#333">Lots ?</div>
<svg class="abs" style="left:1173px;top:699px" width="22" height="22"><path d="M17.5 6 A8.5 8.5 0 1 0 19.5 11" fill="none" stroke="#ddd" stroke-width="1.8"/><path d="M6.5 11 L10 14.5 L18 6.5" fill="none" stroke="#ddd" stroke-width="1.8"/></svg>
<div class="lbl" style="left:254px;top:725px;color:#3a3a3a">Lieu enlevement</div>
<div class="inp" style="left:254px;top:743px;width:215px;height:24px;background:#fff;border-color:#e0e0e0"></div>
<div class="abs" style="left:444px;top:744px;width:1px;height:22px;background:#f3f3f3"></div>
<div class="t" style="left:256px;top:747px;font-size:16px;color:#888">CHOLET</div>
<div class="dots" style="left:450px;top:755px;color:#999;font-size:11px;letter-spacing:0.8px">...</div>
<div class="lbl" style="left:284px;top:796px;color:#3a3a3a">Texte</div>
<div class="abs" style="left:284px;top:813px;width:284px;height:59px;background:#fff"></div>
<div class="abs" style="left:568px;top:813px;width:15px;height:59px;background:#f0f0f0"></div>
<svg class="abs" style="left:568px;top:815px" width="15" height="57"><path d="M4 8 L7.5 4.5 L11 8" fill="none" stroke="#bbb" stroke-width="1.3"/><path d="M4 48 L7.5 51.5 L11 48" fill="none" stroke="#bbb" stroke-width="1.3"/></svg>
<svg class="abs" style="left:258px;top:818px" width="16" height="16"><path d="M8 2.5 V13.5 M2.5 8 H13.5" stroke="#1a1aa0" stroke-width="2.4"/></svg>
<div class="abs" style="left:249px;top:883px;width:1666px;height:46px;background:#f0f0f0"></div>
<div class="abs" style="left:249px;top:882px;width:1650px;height:1px;background:#e0e0e0"></div>
<svg class="abs" style="left:258px;top:894px" width="32" height="30"><path d="M8.5 7.5 V5.5 Q8.5 4.5 9.5 4.5 H26.5 Q27.5 4.5 27.5 5.5 V21.5 Q27.5 22.5 26.5 22.5 H24" fill="none" stroke="#111" stroke-width="2"/><rect x="4.5" y="7.5" width="19" height="19" rx="1.2" fill="none" stroke="#111" stroke-width="2"/></svg>
<svg class="abs" style="left:296px;top:895px" width="28" height="28"><circle cx="14" cy="14" r="11" fill="none" stroke="#111" stroke-width="2"/><path d="M14 8.5 V19.5 M8.5 14 H19.5" stroke="#111" stroke-width="2.2"/></svg>
<svg class="abs" style="left:334px;top:895px" width="24" height="28"><path d="M3 4.5 H21" stroke="#111" stroke-width="2.2"/><path d="M9 3 Q9 1.8 10 1.8 H14 Q15 1.8 15 3" fill="none" stroke="#111" stroke-width="1.5"/><path d="M4.5 7 H19.5 L18.5 25.5 H5.5 Z" fill="#111"/><path d="M8.5 10 V22.5 M12 10 V22.5 M15.5 10 V22.5" stroke="#f0f0f0" stroke-width="1.6"/></svg>
<svg class="abs" style="left:404px;top:895px" width="28" height="28"><path d="M22.5 7 A11 11 0 1 0 24.5 14" fill="none" stroke="#d8d8d8" stroke-width="2"/><path d="M8.5 13.5 L13 18 L23 7.5" fill="none" stroke="#d8d8d8" stroke-width="2"/></svg>
<svg class="abs" style="left:593px;top:895px" width="28" height="28"><rect x="8.6" y="2.5" width="11.8" height="7.1" rx="0.8" fill="#111"/><path d="M10.5 5 H18.5 M10.5 7 H18.5" stroke="#333" stroke-width="0.7"/><path d="M5.2 6.7 H8.6 V11.4 H20.4 V6.7 H23.3 Q26.1 6.7 26.1 10.5 V17 Q26.1 20.8 23.3 20.8 H20.4 V16 H8.6 V20.8 H5.2 Q2.4 20.8 2.4 17 V10.5 Q2.4 6.7 5.2 6.7 Z" fill="#111"/><rect x="8.6" y="17.6" width="11.8" height="7.9" rx="0.8" fill="#222"/><path d="M10.3 20.3 H18.7 M10.3 23 H18.7" stroke="#8a8a8a" stroke-width="1.1"/></svg>
<svg class="abs" style="left:632px;top:895px" width="32" height="30"><rect x="8.8" y="2" width="11.4" height="6.3" rx="0.8" fill="#111"/><path d="M5 6.2 H8.2 V10.9 H20 V14.5 H8.2 V19.7 H5 Q2.3 19.7 2.3 16 V10 Q2.3 6.2 5 6.2 Z" fill="#111"/><path d="M21.5 6.7 H23.5 Q26.2 6.7 26.2 9.5 V10.9 H21.5 Z" fill="#111"/><path d="M8.3 17 H12 V18.5 H10 V22.5 H12 V24 H8.3 Z" fill="#222"/><circle cx="21" cy="19.5" r="7" fill="#fff" stroke="#9a9a9a" stroke-width="1.4"/><path d="M18.4 15.3 L24.8 19.5 L18.4 23.6 L20.4 19.5 Z" fill="#111"/></svg>
<div class="t" style="left:1792px;top:901px;font-size:19.5px;font-weight:bold;color:#3f5a8c">Consultation</div>
</body></html>
